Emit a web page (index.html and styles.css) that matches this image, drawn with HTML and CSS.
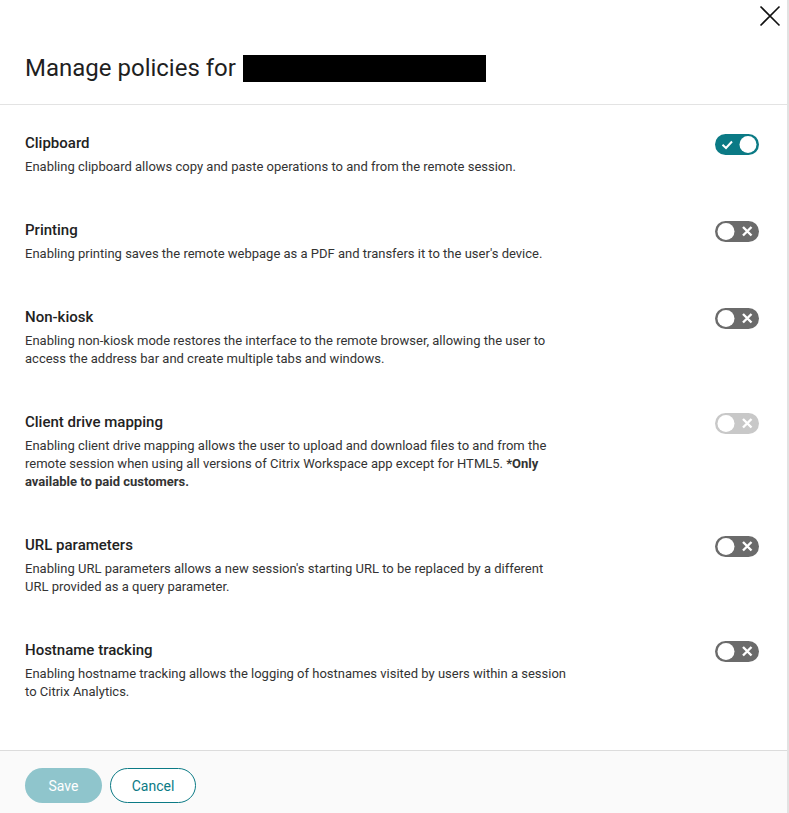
FILE: index.html
```html
<!DOCTYPE html>
<html lang="en">
<head>
<meta charset="utf-8">
<title>Manage policies</title>
<link rel="stylesheet" href="styles.css">
</head>
<body>
<div class="modal">
  <header class="header">
    <h1 class="title">Manage policies for <span class="redact"></span></h1>
    <button class="close" aria-label="Close">
      <svg width="22" height="22" viewBox="0 0 22 22"><path d="M1.5 1.5 L20.5 20.5 M20.5 1.5 L1.5 20.5" stroke="#111" stroke-width="1.6" fill="none"/></svg>
    </button>
  </header>
  <main class="content">
    <div class="item">
      <div class="text">
        <div class="name">Clipboard</div>
        <div class="desc">Enabling clipboard allows copy and paste operations to and from the remote session.</div>
      </div>
      <svg class="toggle" width="44" height="21" viewBox="0 0 44 21"><rect width="44" height="21" rx="10.5" fill="#0b7a85"/><circle cx="33" cy="10.5" r="8.5" fill="#fff"/><path d="M7.5 10.8 L11 14 L17 7.5" stroke="#fff" stroke-width="2" fill="none"/></svg>
    </div>
    <div class="item">
      <div class="text">
        <div class="name">Printing</div>
        <div class="desc">Enabling printing saves the remote webpage as a PDF and transfers it to the user's device.</div>
      </div>
      <svg class="toggle" width="44" height="21" viewBox="0 0 44 21"><rect width="44" height="21" rx="10.5" fill="#6b6b6b"/><circle cx="11" cy="10.5" r="8.5" fill="#fff"/><path d="M28 6 L36.5 14.5 M36.5 6 L28 14.5" stroke="#fff" stroke-width="2.4" fill="none"/></svg>
    </div>
    <div class="item">
      <div class="text">
        <div class="name">Non-kiosk</div>
        <div class="desc">Enabling non-kiosk mode restores the interface to the remote browser, allowing the user to<br>access the address bar and create multiple tabs and windows.</div>
      </div>
      <svg class="toggle" width="44" height="21" viewBox="0 0 44 21"><rect width="44" height="21" rx="10.5" fill="#6b6b6b"/><circle cx="11" cy="10.5" r="8.5" fill="#fff"/><path d="M28 6 L36.5 14.5 M36.5 6 L28 14.5" stroke="#fff" stroke-width="2.4" fill="none"/></svg>
    </div>
    <div class="item">
      <div class="text">
        <div class="name">Client drive mapping</div>
        <div class="desc">Enabling client drive mapping allows the user to upload and download files to and from the<br>remote session when using all versions of Citrix Workspace app except for HTML5. <b>*Only<br>available to paid customers.</b></div>
      </div>
      <svg class="toggle" width="44" height="21" viewBox="0 0 44 21"><rect width="44" height="21" rx="10.5" fill="#c8c8c8"/><circle cx="11" cy="10.5" r="8.5" fill="#fff"/><path d="M28 6 L36.5 14.5 M36.5 6 L28 14.5" stroke="#fff" stroke-width="2.4" fill="none"/></svg>
    </div>
    <div class="item">
      <div class="text">
        <div class="name">URL parameters</div>
        <div class="desc">Enabling URL parameters allows a new session's starting URL to be replaced by a different<br>URL provided as a query parameter.</div>
      </div>
      <svg class="toggle" width="44" height="21" viewBox="0 0 44 21"><rect width="44" height="21" rx="10.5" fill="#6b6b6b"/><circle cx="11" cy="10.5" r="8.5" fill="#fff"/><path d="M28 6 L36.5 14.5 M36.5 6 L28 14.5" stroke="#fff" stroke-width="2.4" fill="none"/></svg>
    </div>
    <div class="item">
      <div class="text">
        <div class="name">Hostname tracking</div>
        <div class="desc">Enabling hostname tracking allows the logging of hostnames visited by users within a session<br>to Citrix Analytics.</div>
      </div>
      <svg class="toggle" width="44" height="21" viewBox="0 0 44 21"><rect width="44" height="21" rx="10.5" fill="#6b6b6b"/><circle cx="11" cy="10.5" r="8.5" fill="#fff"/><path d="M28 6 L36.5 14.5 M36.5 6 L28 14.5" stroke="#fff" stroke-width="2.4" fill="none"/></svg>
    </div>
  </main>
  <footer class="footer">
    <button class="btn btn-save">Save</button>
    <button class="btn btn-cancel">Cancel</button>
  </footer>
</div>
</body>
</html>
```
FILE: styles.css
```css
html, body {
  margin: 0;
  padding: 0;
  background: #fff;
}
body {
  font-family: Roboto, "Liberation Sans", Arial, sans-serif;
  color: #222;
}
.modal {
  width: 789px;
  height: 813px;
  box-sizing: border-box;
  border-right: 2px solid #e2e2e2;
  display: flex;
  flex-direction: column;
}
.header {
  position: relative;
  height: 105px;
  box-sizing: border-box;
  border-bottom: 1px solid #e3e3e3;
  padding: 53px 0 0 25px;
}
.title {
  margin: 0;
  font-size: 24px;
  font-weight: 400;
  line-height: 30px;
  color: #1f1f1f;
  display: flex;
  align-items: center;
  gap: 7px;
}
.redact {
  display: inline-block;
  width: 243px;
  height: 27px;
  background: #000;
}
.close {
  position: absolute;
  top: 3px;
  right: 4px;
  width: 26px;
  height: 26px;
  padding: 2px;
  border: 0;
  background: transparent;
}
.content {
  flex: 1;
  padding: 28px 28px 0 25px;
}
.item {
  display: flex;
  justify-content: space-between;
  align-items: flex-start;
  padding-bottom: 44px;
}
.name {
  font-size: 15px;
  font-weight: 500;
  line-height: 20px;
  color: #222;
}
.desc {
  margin-top: 5px;
  font-size: 13px;
  line-height: 18px;
  color: #333;
}
.desc b {
  font-weight: 700;
}
.toggle {
  display: block;
  margin-top: 1px;
  flex: none;
}
.footer {
  height: 63px;
  box-sizing: border-box;
  border-top: 1px solid #dcdcdc;
  background: #fafafa;
  padding: 17px 25px 0;
  display: flex;
  gap: 8px;
  align-items: flex-start;
}
.btn {
  height: 35px;
  border-radius: 18px;
  font-family: Roboto, "Liberation Sans", Arial, sans-serif;
  font-size: 14px;
  padding: 0;
}
.btn-save {
  width: 77px;
  background: #8fc5cc;
  border: 0;
  color: #fff;
}
.btn-cancel {
  width: 86px;
  background: #fff;
  border: 1px solid #0b7a85;
  color: #0b7a85;
}
```
